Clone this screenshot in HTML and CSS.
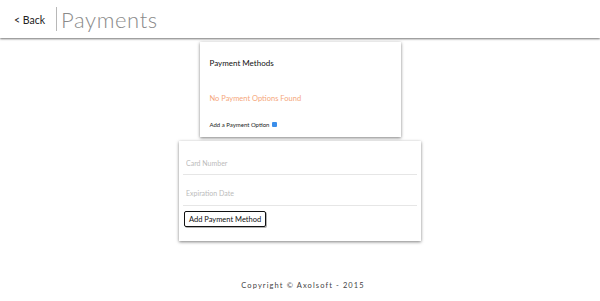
FILE: index.html
```html
<!DOCTYPE html>
<html lang="en">
<head>
  <meta charset="UTF-8" />
  <title>Payments</title>
  <meta name="viewport" content="width=device-width, initial-scale=1.0"/>
  <link rel="stylesheet" href="styles.css">
</head>
<body>

  <header class="topbar">
    <a class="back" href="#">&lt; Back</a>
    <span class="divider"></span>
    <h1 class="page-title">Payments</h1>
  </header>

  <main class="content">
    <section class="card methods">
      <h2 class="card-title">Payment Methods</h2>
      <p class="empty">No Payment Options Found</p>
      <label class="add-option">Add a Payment Option <span class="check"></span></label>
    </section>

    <section class="card form">
      <input class="field" type="text" placeholder="Card Number">
      <input class="field" type="text" placeholder="Expiration Date">
      <button class="submit">Add Payment Method</button>
    </section>
  </main>

  <footer class="footer">Copyright &copy; Axolsoft - 2015</footer>

</body>
</html>
```

FILE: styles.css
```css
body {
  margin: 0;
  font-family: Lato, 'Open Sans', sans-serif;
  background: #fff;
  color: #222;
  height: 301px;
  display: flex;
  flex-direction: column;
}

.topbar {
  height: 38px;
  display: flex;
  align-items: center;
  padding-left: 14px;
  box-shadow: 0 1px 2px rgba(0,0,0,0.55);
  margin-bottom: 4px;
}

.back {
  color: #222;
  text-decoration: none;
  font-size: 10.5px;
  margin-top: 2px;
}

.divider {
  width: 1px;
  height: 24px;
  background: #b8b8b8;
  margin: 0 4px 0 11px;
}

.page-title {
  margin: 0;
  font-size: 22px;
  font-weight: 300;
  letter-spacing: 0.6px;
  color: #8a8a8a;
}

.content {
  display: flex;
  flex-direction: column;
  align-items: center;
  gap: 4px;
}

.card {
  background: #fff;
  box-shadow: 0 1px 3px rgba(0,0,0,0.5);
}

.methods {
  width: 191px;
  height: 95px;
  padding-left: 10px;
  display: flex;
  flex-direction: column;
}

.card-title {
  margin: 16px 0 0;
  font-size: 8px;
  font-weight: 400;
  height: 10px;
  color: #111;
}

.empty {
  margin: 26px 0 0;
  font-size: 7.5px;
  color: #f5a77c;
  height: 10px;
}

.add-option {
  margin-top: 17px;
  font-size: 6px;
  display: flex;
  align-items: center;
  gap: 3px;
}

.check {
  width: 5px;
  height: 5px;
  background: #3b8eea;
  border-radius: 1px;
}

.form {
  width: 234px;
  height: 90px;
  padding: 10px 4px 0 4px;
  display: flex;
  flex-direction: column;
  align-items: flex-start;
}

.field {
  width: 100%;
  box-sizing: border-box;
  border: none;
  border-bottom: 1px solid #e6e6e6;
  height: 24px;
  padding: 0 3px;
  font-family: inherit;
  font-size: 7px;
  margin-bottom: 6px;
  outline: none;
}

.field:last-of-type {
  height: 25px;
  margin-bottom: 5px;
}

.field::placeholder {
  color: #bbb;
}

.submit {
  font-family: inherit;
  font-size: 7.5px;
  height: 16px;
  padding: 0 4px;
  margin-left: 1px;
  border: 1px solid #111;
  border-radius: 2px;
  background: #fff;
  color: #111;
  box-shadow: 1px 1px 0 rgba(0,0,0,0.3);
}

.footer {
  margin-top: auto;
  text-align: center;
  font-size: 7.5px;
  letter-spacing: 1.1px;
  color: #444;
  padding-bottom: 11px;
  padding-left: 6px;
}
```
